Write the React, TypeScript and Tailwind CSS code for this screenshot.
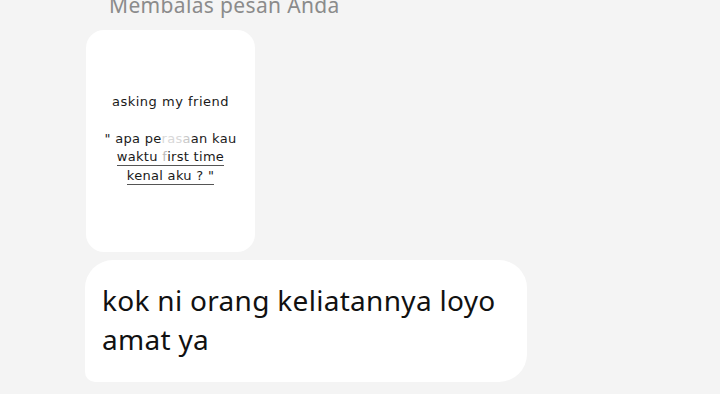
export default function App() {
  return (
    <div className="w-[720px] h-[394px] overflow-hidden bg-[#f4f4f4] pl-[85px]" style={{ fontFamily: '"Noto Sans", Roboto, sans-serif' }}>
      <div className="-mt-[9px] pl-[24px] text-[21px] leading-[28px] tracking-[0.35px] text-[#8b8b8b]">Membalas pesan Anda</div>

      {/* replied story */}
      <div className="mt-[11px] ml-[1px] w-[169px] h-[222px] rounded-[18px] bg-white flex flex-col items-center justify-center text-[13px] text-[#1a1a1a] font-['DejaVu_Sans',sans-serif] leading-[18px] pb-[4px]">
        <div className="tracking-[0.5px]">asking my friend</div>
        <div className="h-[19px]" />
        <div className="tracking-[0.3px]">
          " apa pe<span className="text-[#d8d8d8]">ras</span><span className="text-[#c8c8c8]">a</span>an kau
        </div>
        <div className="tracking-[0.3px] border-b border-[#555] leading-[17px]">
          waktu <span className="text-[#bbb]">f</span>irst time
        </div>
        <div className="tracking-[0.3px] border-b border-[#555] leading-[17px] mt-[1px]">kenal aku ? "</div>
      </div>

      {/* message bubble */}
      <div className="mt-[8px] w-[442px] h-[122px] rounded-[28px] rounded-bl-[10px] bg-white px-[17px] pt-[21px] text-[28px] leading-[39px] tracking-[0.3px] text-[#111]">
        kok ni orang keliatannya loyo amat ya
      </div>
    </div>
  );
}
